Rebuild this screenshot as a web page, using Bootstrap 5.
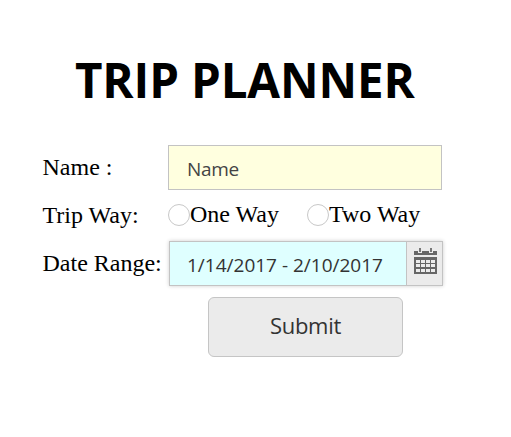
<!DOCTYPE html>
<html lang="en">
<head>
<meta charset="utf-8">
<meta name="viewport" content="width=device-width, initial-scale=1">
<title>Trip Planner</title>
<link href="https://cdn.jsdelivr.net/npm/bootstrap@5.3.0/dist/css/bootstrap.min.css" rel="stylesheet">
<style>
body{font-family:"Liberation Serif",serif;font-size:24px;line-height:28px;color:#000;background:#fff;overflow:hidden}
.planner{width:402px;margin-left:42px;padding-top:50px}
.planner-title{font:700 47.5px/60px "Open Sans",sans-serif;letter-spacing:-.15px;margin:0 0 35px 33px;white-space:nowrap}
.trip-label{width:126px;flex:none;white-space:nowrap;padding:0 0 2px .5px}
.way-option span,.way-last span{padding:0 0 3px}
.ui-font,.ui-font.form-control{font-family:"Open Sans",sans-serif;font-size:19px;color:#333}
.name-box.form-control{width:274px;height:45px;flex:none;border:1px solid #c3c3c3;background:#ffffdf;padding:3px 17px 0 18px;line-height:26px;letter-spacing:-.3px}
.name-box::placeholder{color:#444;opacity:1}
.way-row{height:51px}
.way-row .form-check-input{width:22px;height:22px;margin:0 0 2px;border:1px solid #c8c8c8;flex:none}
.way-option{width:139px}
.range-box{width:274px;height:45px;margin-left:1px;border:1px solid #c3c3c3;background:#dff;box-shadow:0 0 4px rgba(0,0,0,.2);flex:none}
.range-box .form-control{background:#dfffff;padding:3px 0 0 17px;line-height:26px}
.range-button{width:36px;background:#ebebeb;border-left:1px solid #c3c3c3;padding:0 0 5px 1px}
.submit-button.btn{width:195px;height:60px;margin:11px 0 0 166px;border:1px solid #c5c5c5;border-radius:6px;background:#ebebeb;font-size:22px;line-height:28px;letter-spacing:-.3px;padding:0 0 4px}
</style>
</head>
<body>
<form class="planner">
<h1 class="planner-title">TRIP PLANNER</h1>
<div class="d-flex align-items-center">
<label class="trip-label" for="name">Name :</label>
<input id="name" class="form-control rounded-0 ui-font name-box" placeholder="Name">
</div>
<div class="d-flex align-items-center way-row">
<span class="trip-label">Trip Way:</span>
<label class="d-flex align-items-center way-option text-nowrap"><input class="form-check-input" type="radio" name="way"><span>One Way</span></label>
<label class="d-flex align-items-center way-last text-nowrap"><input class="form-check-input" type="radio" name="way"><span>Two Way</span></label>
</div>
<div class="d-flex align-items-center">
<label class="trip-label" for="range">Date Range:</label>
<div class="d-flex range-box">
<input id="range" class="form-control rounded-0 border-0 ui-font" value="1/14/2017 - 2/10/2017">
<button type="button" class="btn rounded-0 border-top-0 border-bottom-0 border-end-0 range-button d-flex align-items-center justify-content-center flex-shrink-0" aria-label="Choose dates">
<svg width="23" height="26" viewBox="0 0 23 26" fill="#666" shape-rendering="crispEdges">
<path d="M0 3h4v2h4V3h7v2h4V3h4v4H0z"/><path d="M5 0h2v4H5zM16 0h2v4h-2z" fill="#777"/>
<path fill-rule="evenodd" d="M0 9h23v17H0zM2 12v3h4v-3zM7 12v3h4v-3zM12 12v3h4v-3zM17 12v3h4v-3zM2 16v3h4v-3zM7 16v3h4v-3zM12 16v3h4v-3zM17 16v3h4v-3zM2 21v3h4v-3zM7 21v3h4v-3zM12 21v3h4v-3zM17 21v3h4v-3z"/>
</svg>
</button>
</div>
</div>
<button type="button" class="btn ui-font submit-button">Submit</button>
</form>
<script src="https://cdn.jsdelivr.net/npm/bootstrap@5.3.0/dist/js/bootstrap.bundle.min.js"></script>
</body>
</html>
